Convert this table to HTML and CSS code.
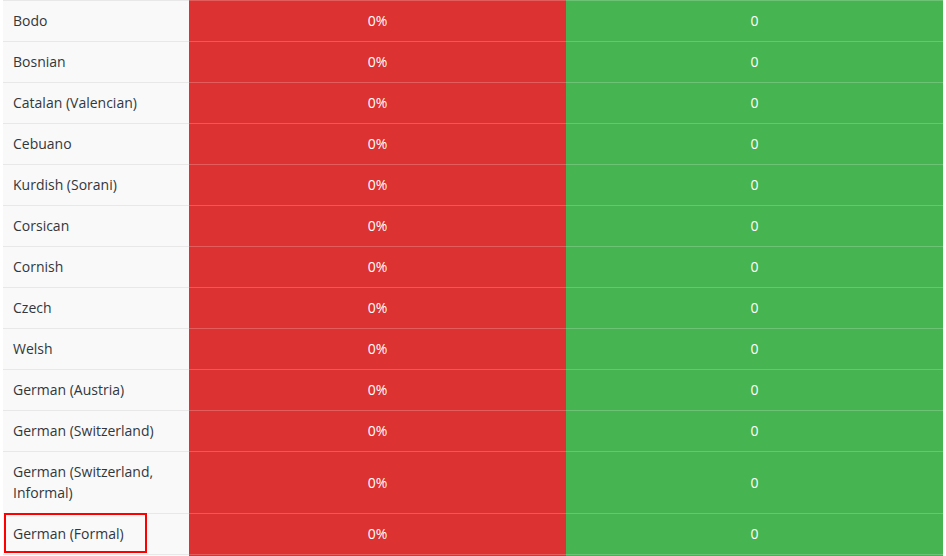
FILE: index.html
```html
<!DOCTYPE html>
<html>
<head>
<meta charset="utf-8">
<link rel="stylesheet" href="styles.css">
</head>
<body>
<table class="stats">
  <colgroup><col class="c-name"><col class="c-pct"><col class="c-cnt"></colgroup>
  <tbody>
    <tr><td class="name">Bodo</td><td class="pct">0%</td><td class="cnt">0</td></tr>
    <tr><td class="name">Bosnian</td><td class="pct">0%</td><td class="cnt">0</td></tr>
    <tr><td class="name">Catalan (Valencian)</td><td class="pct">0%</td><td class="cnt">0</td></tr>
    <tr><td class="name">Cebuano</td><td class="pct">0%</td><td class="cnt">0</td></tr>
    <tr><td class="name">Kurdish (Sorani)</td><td class="pct">0%</td><td class="cnt">0</td></tr>
    <tr><td class="name">Corsican</td><td class="pct">0%</td><td class="cnt">0</td></tr>
    <tr><td class="name">Cornish</td><td class="pct">0%</td><td class="cnt">0</td></tr>
    <tr><td class="name">Czech</td><td class="pct">0%</td><td class="cnt">0</td></tr>
    <tr><td class="name">Welsh</td><td class="pct">0%</td><td class="cnt">0</td></tr>
    <tr><td class="name">German (Austria)</td><td class="pct">0%</td><td class="cnt">0</td></tr>
    <tr><td class="name">German (Switzerland)</td><td class="pct">0%</td><td class="cnt">0</td></tr>
    <tr><td class="name">German (Switzerland, Informal)</td><td class="pct">0%</td><td class="cnt">0</td></tr>
    <tr><td class="name highlighted">German (Formal)<span class="mark"></span></td><td class="pct">0%</td><td class="cnt">0</td></tr>
    <tr class="filler"><td class="name"></td><td class="pct"></td><td class="cnt"></td></tr>
  </tbody>
</table>
</body>
</html>
```

FILE: styles.css
```css
html, body {
  margin: 0;
  padding: 0;
  background: #fff;
}
body {
  padding: 0 3px;
  font-family: "Open Sans", "Noto Sans", sans-serif;
  font-size: 14px;
  color: #32373c;
}
.stats {
  width: 940px;
  border-collapse: collapse;
  table-layout: fixed;
}
.c-name { width: 186px; }
.c-pct { width: 377px; }
.c-cnt { width: 377px; }
.stats td {
  padding: 9px 10px 10px;
  line-height: 21px;
  border-top: 1px solid #e8e8e8;
  vertical-align: middle;
}
.stats td.name {
  background: #f9f9f9;
}
.stats td.pct {
  background: #dc3232;
  color: #fff;
  text-align: center;
  border-top-color: #e35d5d;
}
.stats td.cnt {
  background: #46b450;
  color: #fff;
  text-align: center;
  border-top-color: #6bc373;
}
.filler td {
  height: 21px;
}
.highlighted {
  position: relative;
}
.mark {
  position: absolute;
  left: 1px;
  top: -1px;
  width: 139px;
  height: 36px;
  border: 2px solid #f00;
}
```
